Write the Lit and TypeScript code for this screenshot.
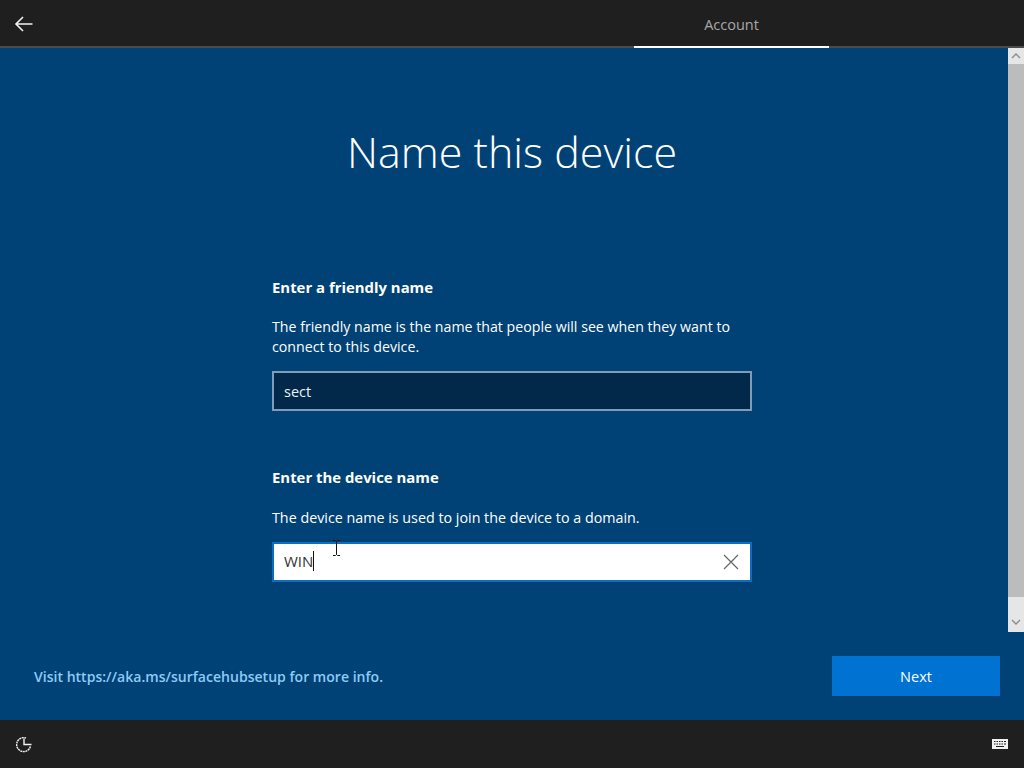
import { LitElement, html, css } from "lit";
import { customElement } from "lit/decorators.js";

@customElement("app-root")
export class AppRoot extends LitElement {
  static styles = css`
    :host {
      display: flex;
      flex-direction: column;
      width: 1024px;
      height: 768px;
      overflow: hidden;
      font-family: "Open Sans", "Noto Sans", sans-serif;
      color: #fff;
      background: #004275;
    }
    .top {
      height: 46px;
      flex: none;
      background: #1f1f1f;
      border-bottom: 2px solid #4b4b4b;
      display: flex;
      align-items: stretch;
      position: relative;
    }
    .back {
      width: 48px;
      display: flex;
      align-items: center;
      justify-content: center;
      padding-top: 2px;
    }
    .spacer { flex: 1; }
    .tab {
      width: 195px;
      margin-right: 195px;
      margin-bottom: -2px;
      border-bottom: 2px solid #fff;
      display: flex;
      align-items: center;
      justify-content: center;
      font-size: 14.5px;
      color: #a8a8a8;
      padding-top: 3px;
      box-sizing: border-box;
      height: 48px;
    }
    .main {
      flex: 1;
      display: flex;
      min-height: 0;
      position: relative;
    }
    .col {
      flex: 1;
      display: flex;
      flex-direction: column;
      min-width: 0;
    }
    h1 {
      margin: 69px 0 0;
      text-align: center;
      font-weight: 300;
      font-size: 43px;
      line-height: 70px;
    }
    .form {
      width: 480px;
      margin: 90px 0 0 272px;
      display: flex;
      flex-direction: column;
    }
    .label {
      font-size: 14.9px;
      font-weight: 700;
      line-height: 20px;
    }
    .desc {
      margin-top: 20px;
      font-size: 14.2px;
      line-height: 20px;
    }
    .field {
      margin-top: 14px;
      height: 40px;
      box-sizing: border-box;
      display: flex;
      align-items: center;
      padding: 0 10px;
      font-size: 14.5px;
      border: 2px solid #7f9db8;
      background: #02284a;
      color: #eaf2f8;
    }
    .gap { margin-top: 56px; }
    .narrow { margin-top: 21px; font-size: 14.3px; }
    .field.active {
      background: #fff;
      border-color: #0a6fc2;
      color: #333;
      position: relative;
      font-size: 15px;
      padding-bottom: 3px;
    }
    .caret {
      display: inline-block;
      width: 1px;
      height: 20px;
      background: #111;
    }
    .clear {
      margin-left: auto;
      margin-right: 1px;
      display: flex;
      margin-top: 3px;
    }
    .ibeam {
      position: absolute;
      left: 58px;
      top: -4px;
    }
    .footer {
      margin-top: auto;
      height: 64px;
      flex: none;
      display: flex;
      align-items: flex-start;
      justify-content: space-between;
      padding: 0 24px 0 34px;
    }
    .link {
      font-size: 14.05px;
      font-weight: 600;
      color: #8ccbf5;
      line-height: 42px;
    }
    .next {
      width: 168px;
      height: 40px;
      background: #0072d2;
      color: #fff;
      font-size: 14.5px;
      display: flex;
      align-items: center;
      justify-content: center;
    }
    .bar {
      position: absolute;
      top: 0;
      right: 0;
      width: 16px;
      height: 584px;
      display: flex;
      flex-direction: column;
      background: #e6e6e6;
    }
    .arrow {
      height: 16px;
      flex: none;
      display: flex;
      align-items: center;
      justify-content: center;
    }
    .thumb {
      height: 533px;
      flex: none;
      background: #bcbcbc;
    }
    .rest {
      flex: 1;
      display: flex;
      flex-direction: column;
      justify-content: flex-end;
      padding-bottom: 2px;
    }
    .bottom {
      height: 48px;
      flex: none;
      background: #1f1f1f;
      display: flex;
      align-items: center;
      justify-content: space-between;
      padding: 0 16px;
    }
    .clock { margin-top: 2px; }
    svg { display: block; }
  `;

  render() {
    return html`
      <div class="top">
        <div class="back">
          <svg width="20" height="16" viewBox="0 0 20 16" fill="none" stroke="#f2f2f2" stroke-width="1.6">
            <path d="M18.5 8H2M9 1 2 8l7 7" />
          </svg>
        </div>
        <div class="spacer"></div>
        <div class="tab">Account</div>
      </div>
      <div class="main">
        <div class="col">
          <h1>Name this device</h1>
          <div class="form">
            <div class="label">Enter a friendly name</div>
            <div class="desc">The friendly name is the name that people will see when they want to connect to this device.</div>
            <div class="field">sect</div>
            <div class="label gap">Enter the device name</div>
            <div class="desc narrow">The device name is used to join the device to a domain.</div>
            <div class="field active">
              <span>WIN</span><span class="caret"></span>
              <svg class="ibeam" width="9" height="16" viewBox="0 0 9 16" fill="none" stroke="#111" stroke-width="1">
                <path d="M1 .5h2.500l1 1 1-1H8M4.500 1.500v13M1 15.500h2.500l1-1 1 1H8" />
              </svg>
              <span class="clear">
                <svg width="16" height="16" viewBox="0 0 16 16" fill="none" stroke="#666" stroke-width="1.2">
                  <path d="M1 1l14 14M15 1 1 15" />
                </svg>
              </span>
            </div>
          </div>
          <div class="footer">
            <span class="link">Visit https://aka.ms/surfacehubsetup for more info.</span>
            <div class="next">Next</div>
          </div>
        </div>
        <div class="bar">
          <div class="arrow">
            <svg width="10" height="6" viewBox="0 0 10 6" fill="none" stroke="#8a8a8a" stroke-width="1.3"><path d="M1 5l4-4 4 4" /></svg>
          </div>
          <div class="thumb"></div>
          <div class="rest">
            <div class="arrow">
              <svg width="10" height="6" viewBox="0 0 10 6" fill="none" stroke="#8a8a8a" stroke-width="1.3"><path d="M1 1l4 4 4-4" /></svg>
            </div>
          </div>
        </div>
      </div>
      <div class="bottom">
        <svg class="clock" width="16" height="16" viewBox="0 0 16 16" fill="none" stroke="#f2f2f2" stroke-width="1.4">
          <path d="M15.500 7.500H8V1.500" />
          <path d="M14.400 9.500A7 7 0 1 1 10 1" stroke-dasharray="2 .6" />
        </svg>
        <svg width="16" height="12" viewBox="0 0 16 12">
          <rect x="0" y="1" width="16" height="10" fill="#f2f2f2" />
          <path d="M2 3h1.500v1H2zM4.500 3H6v1H4.500zM7 3h1.500v1H7zM9.500 3H11v1H9.500zM12 3h2v1h-2zM2 5.500h1.500v1H2zM4.500 5.500H6v1H4.500zM7 5.500h1.500v1H7zM9.500 5.500H11v1H9.500zM12 5.500h2v1h-2zM4 8h8v1H4z" fill="#1f1f1f" />
        </svg>
      </div>
    `;
  }
}
